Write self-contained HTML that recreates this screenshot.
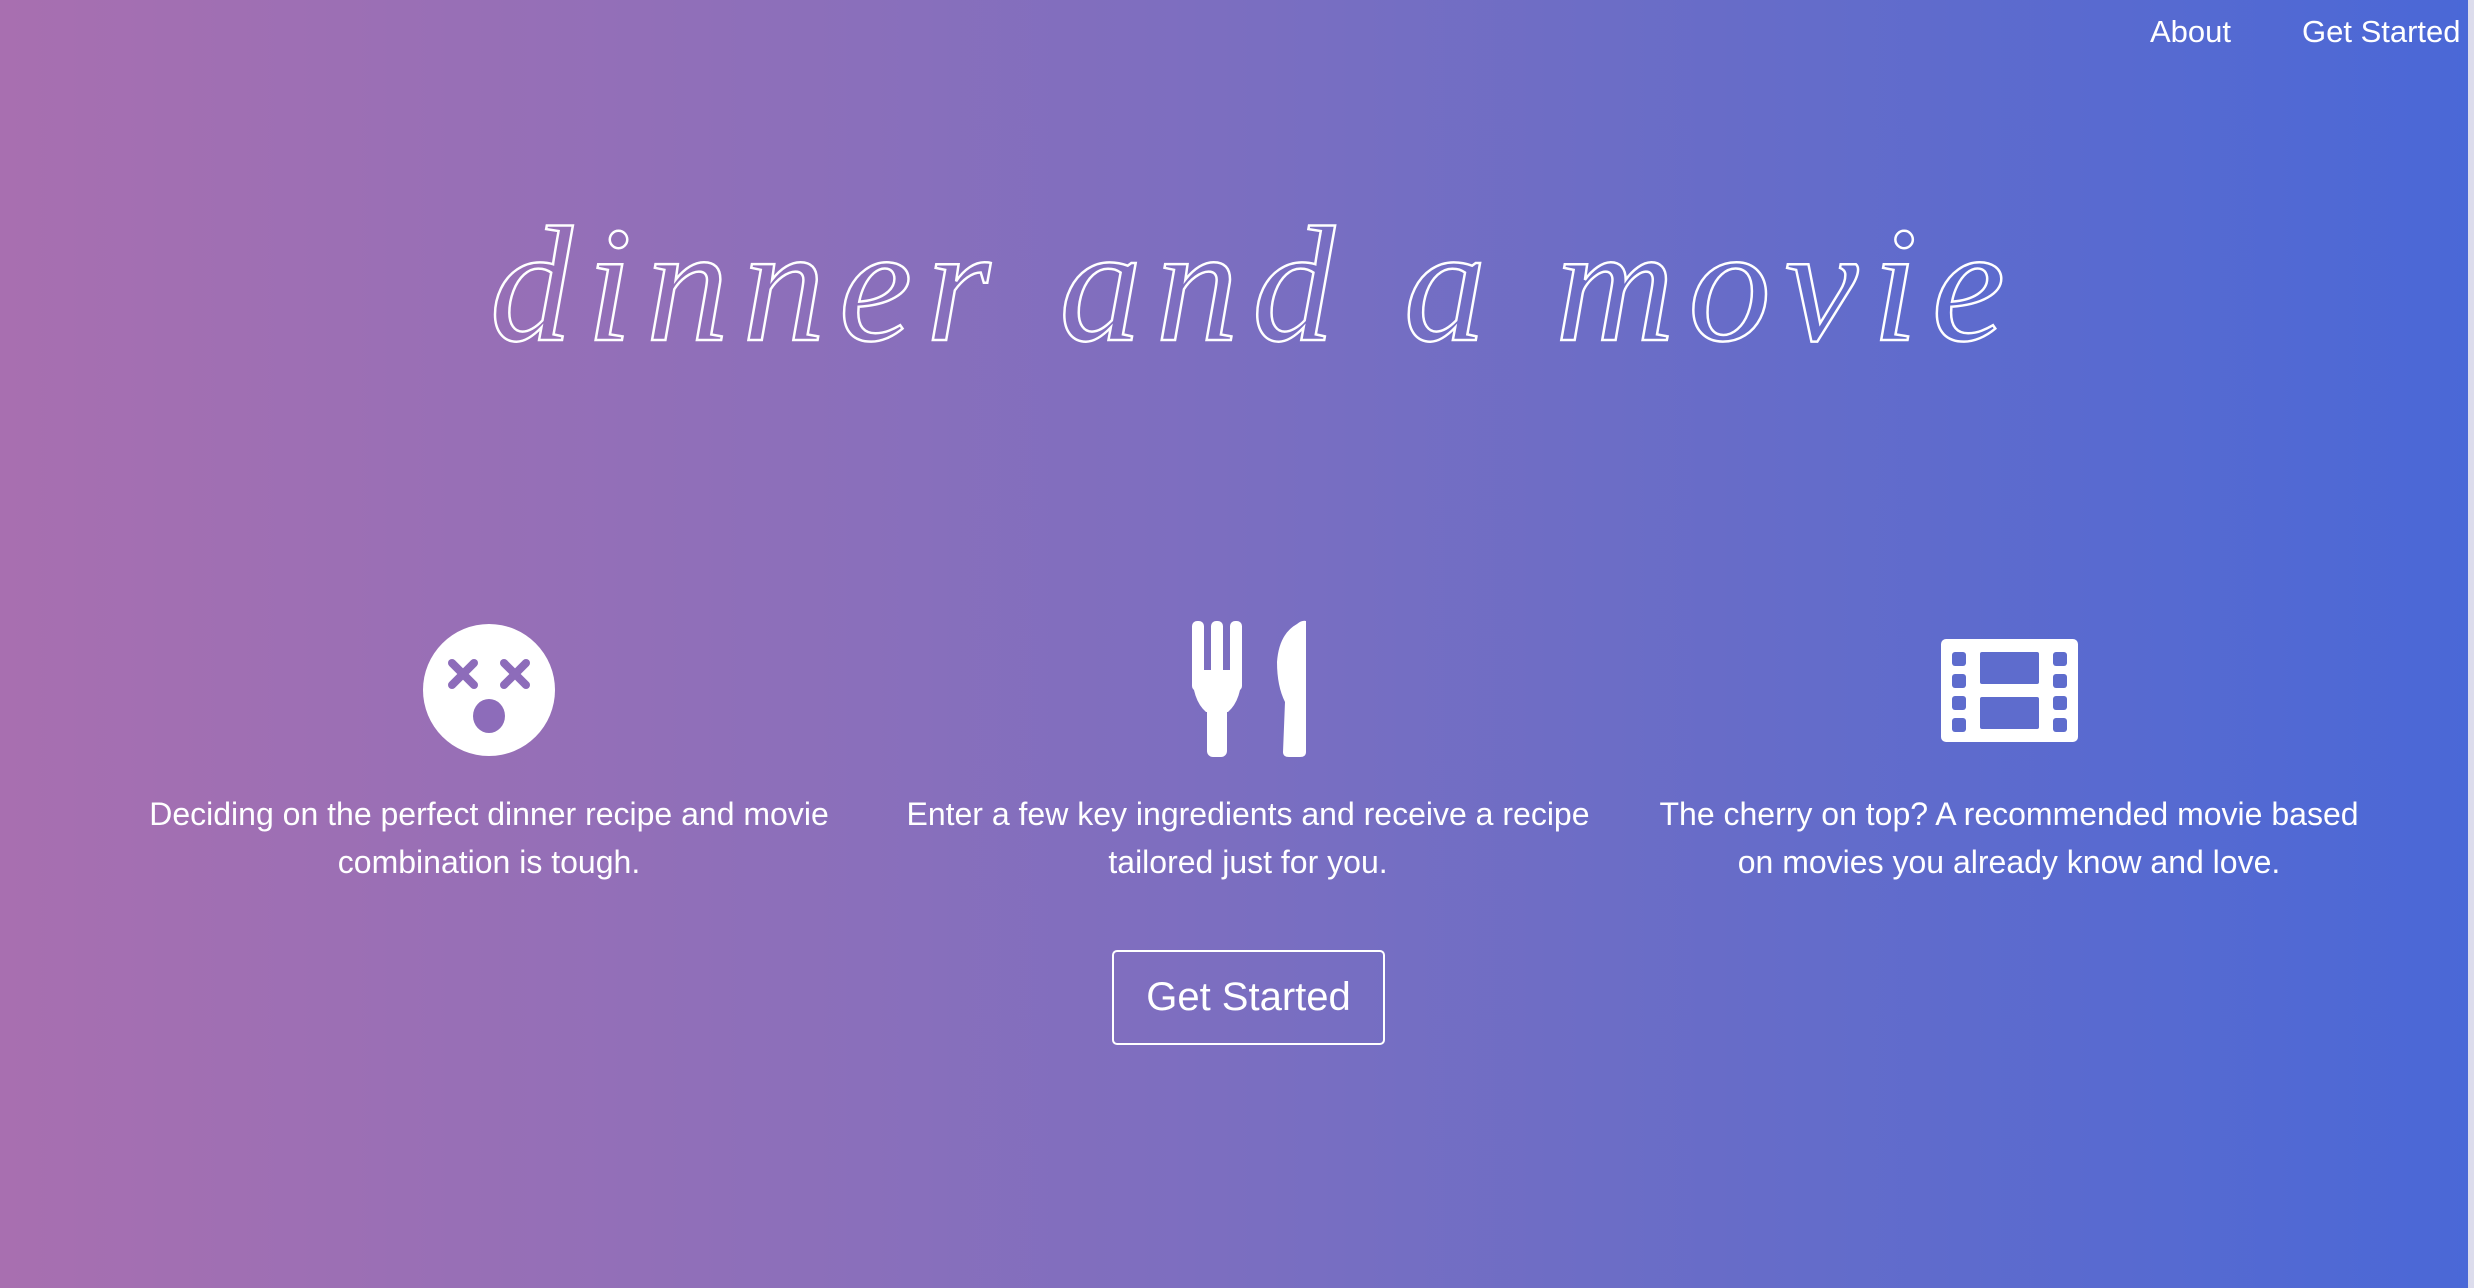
<!DOCTYPE html>
<html><head><meta charset="utf-8"><style>
html,body{margin:0;padding:0}
body{width:2474px;height:1288px;overflow:hidden;position:relative;background:linear-gradient(90deg,#a86fb0 0%,#8a6fbb 35%,#6c6dc6 65%,#4a68d7 100%);font-family:"Liberation Sans",sans-serif;color:#fff}
.strip{position:absolute;right:0;top:0;width:6px;height:1288px;background:#dcdcec}
.nav{position:absolute;top:14px;font-size:31px}
.p{position:absolute;width:720px;text-align:center;font-size:32px;line-height:48px;top:790px}
.btn{position:absolute;left:1112px;top:950px;width:273px;height:95px;border:2px solid #fff;border-radius:5px;box-sizing:border-box;font-size:40px;text-align:center;line-height:91px}
</style></head><body>
<div class="nav" style="left:2150px">About</div>
<div class="nav" style="left:2302px">Get Started</div>
<div class="strip"></div>
<svg style="position:absolute;left:0;top:0" width="2474" height="1288">
<text x="490" y="340" font-family="Liberation Serif" font-style="italic" font-size="165" fill="none" stroke="#fff" stroke-width="2.5" textLength="1515" lengthAdjust="spacing">dinner and a movie</text>
<!-- emoji -->
<circle cx="489" cy="690" r="66" fill="#fff"/>
<g stroke="#8d6cba" stroke-width="8" stroke-linecap="round">
<line x1="452" y1="663" x2="474" y2="685"/><line x1="474" y1="663" x2="452" y2="685"/>
<line x1="504" y1="663" x2="526" y2="685"/><line x1="526" y1="663" x2="504" y2="685"/>
</g>
<ellipse cx="489" cy="716" rx="16" ry="17" fill="#8d6cba"/>
<!-- fork -->
<g fill="#fff">
<rect x="1192" y="621" width="12" height="70" rx="5"/>
<rect x="1211" y="621" width="12" height="70" rx="5"/>
<rect x="1230" y="621" width="12" height="70" rx="5"/>
<path d="M1192 670 h50 q0 30 -14 42 h-22 q-14 -12 -14 -42 z"/>
<rect x="1207" y="700" width="20" height="57" rx="6"/>
<!-- knife -->
<path d="M1306 621 v131 q0 5 -6 5 h-11 q-6 0 -6 -5 l2 -50 q-8 -16 -8 -40 q2 -28 20 -38 q5 -4 9 -3 z"/>
</g>
<!-- film -->
<rect x="1941" y="639" width="137" height="103" rx="5" fill="#fff"/>
<g fill="#5e6ccd">
<rect x="1952" y="652" width="14" height="14" rx="3"/><rect x="1952" y="674" width="14" height="14" rx="3"/><rect x="1952" y="696" width="14" height="14" rx="3"/><rect x="1952" y="718" width="14" height="14" rx="3"/>
<rect x="2053" y="652" width="14" height="14" rx="3"/><rect x="2053" y="674" width="14" height="14" rx="3"/><rect x="2053" y="696" width="14" height="14" rx="3"/><rect x="2053" y="718" width="14" height="14" rx="3"/>
<rect x="1980" y="652" width="59" height="32" rx="2"/><rect x="1980" y="697" width="59" height="32" rx="2"/>
</g>
</svg>
<div class="p" style="left:129px">Deciding on the perfect dinner recipe and movie combination is tough.</div>
<div class="p" style="left:888px">Enter a few key ingredients and receive a recipe tailored just for you.</div>
<div class="p" style="left:1649px">The cherry on top? A recommended movie based on movies you already know and love.</div>
<div class="btn">Get Started</div>
</body></html>
